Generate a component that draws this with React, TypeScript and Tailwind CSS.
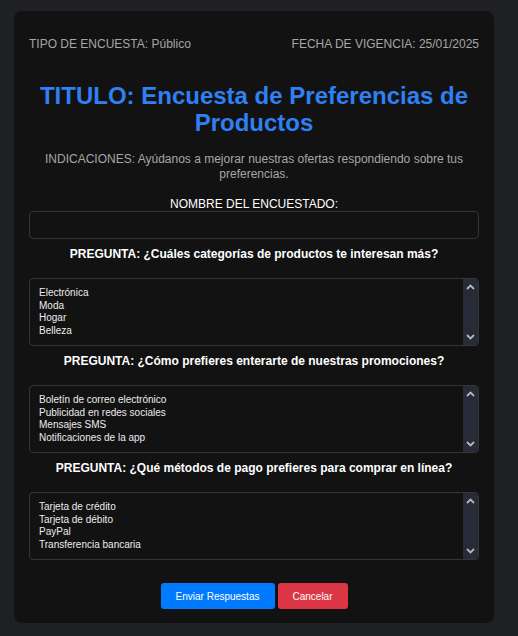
import React from 'react';

const preguntas = [
  {
    texto: 'PREGUNTA: ¿Cuáles categorías de productos te interesan más?',
    opciones: ['Electrónica', 'Moda', 'Hogar', 'Belleza'],
  },
  {
    texto: 'PREGUNTA: ¿Cómo prefieres enterarte de nuestras promociones?',
    opciones: ['Boletín de correo electrónico', 'Publicidad en redes sociales', 'Mensajes SMS', 'Notificaciones de la app'],
  },
  {
    texto: 'PREGUNTA: ¿Qué métodos de pago prefieres para comprar en línea?',
    opciones: ['Tarjeta de crédito', 'Tarjeta de débito', 'PayPal', 'Transferencia bancaria'],
  },
];

function Chevron({ up }: { up?: boolean }) {
  return (
    <svg width="9" height="6" viewBox="0 0 9 6" className="text-[#b4b6bd]">
      <path
        d={up ? 'M1 5 L4.5 1.5 L8 5' : 'M1 1 L4.5 4.5 L8 1'}
        fill="none"
        stroke="currentColor"
        strokeWidth="1.8"
      />
    </svg>
  );
}

function ListaOpciones({ opciones }: { opciones: string[] }) {
  return (
    <div className="flex h-[68px] w-full overflow-hidden rounded-[4px] border border-[#353535] bg-[#121212]">
      <div className="flex-1 pl-[9px] pt-[8px] text-[10px] leading-[12.5px] text-[#ececec]">
        {opciones.map((o) => (
          <div key={o}>{o}</div>
        ))}
      </div>
      <div className="flex w-[15px] flex-col items-center justify-between bg-[#272a37] py-[5px]">
        <Chevron up />
        <Chevron />
      </div>
    </div>
  );
}

export default function App() {
  return (
    <div
      className="min-h-[636px] bg-[#1f2023] pt-[11px]"
      style={{ fontFamily: '"Liberation Sans", Arial, sans-serif' }}
    >
      <div className="ml-[14px] flex h-[612px] w-[480px] flex-col rounded-[8px] bg-[#121212] px-[15px] pt-[26px]">
        <div className="flex justify-between text-[12px] leading-[14px] text-[#a6a6a6]">
          <span>TIPO DE ENCUESTA: Público</span>
          <span>FECHA DE VIGENCIA: 25/01/2025</span>
        </div>

        <h1 className="mt-[31px] text-center text-[24px] font-bold leading-[27px] text-[#2f80f3]">
          TITULO: Encuesta de Preferencias de Productos
        </h1>

        <p className="mt-[16px] px-[10px] text-center text-[12px] leading-[15px] text-[#a6a6a6]">
          INDICACIONES: Ayúdanos a mejorar nuestras ofertas respondiendo sobre tus preferencias.
        </p>

        <label className="mt-[15px] block text-center text-[12px] leading-[14px] text-white">
          NOMBRE DEL ENCUESTADO:
        </label>
        <input
          type="text"
          className="h-[28px] w-full rounded-[4px] border border-[#353535] bg-[#121212] px-2 text-[12px] text-white outline-none"
        />

        {preguntas.map((p, i) => (
          <div key={i} className="flex flex-col">
            <div className="mt-[8px] text-center text-[12px] font-bold leading-[14px] text-white">
              {p.texto}
            </div>
            <div className="mt-[17px]">
              <ListaOpciones opciones={p.opciones} />
            </div>
          </div>
        ))}

        <div className="mt-[23px] flex justify-center gap-[3px]">
          <button className="h-[26px] w-[114px] rounded-[3px] bg-[#007bff] text-[10px] text-white">
            Enviar Respuestas
          </button>
          <button className="h-[26px] w-[70px] rounded-[3px] bg-[#dc3545] text-[10px] text-white">
            Cancelar
          </button>
        </div>
      </div>
    </div>
  );
}
